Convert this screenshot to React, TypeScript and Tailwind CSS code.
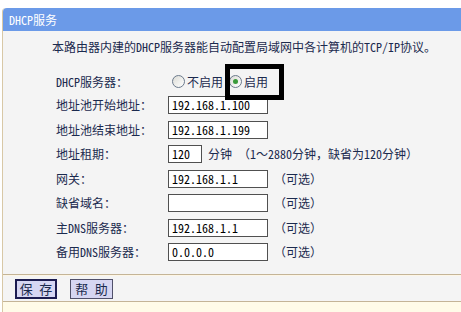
import React from "react";

const font = "font-['Noto_Sans_Mono_CJK_SC','Noto_Sans_CJK_SC',sans-serif]";

type Row = {
  label: string;
  value: string;
  width?: string;
  note?: string;
};

const rows: Row[] = [
  { label: "地址池开始地址：", value: "192.168.1.100" },
  { label: "地址池结束地址：", value: "192.168.1.199" },
  {
    label: "地址租期：",
    value: "120",
    width: "w-[34px]",
    note: "分钟 （1～2880分钟，缺省为120分钟）",
  },
  { label: "网关：", value: "192.168.1.1", note: "（可选）" },
  { label: "缺省域名：", value: "", note: "（可选）" },
  { label: "主DNS服务器：", value: "192.168.1.1", note: "（可选）" },
  { label: "备用DNS服务器：", value: "0.0.0.0", note: "（可选）" },
];

function Radio({ checked, label }: { checked?: boolean; label: string }) {
  return (
    <span className="flex items-center gap-[2px]">
      <span className="flex h-[13px] w-[13px] items-center justify-center rounded-full border border-[#6b7a8c] bg-gradient-to-br from-[#dcdcd6] to-white">
        {checked ? (
          <span className="h-[5px] w-[5px] rounded-full bg-[#3a9a3a]" />
        ) : null}
      </span>
      <span>{label}</span>
    </span>
  );
}

export default function App() {
  return (
    <div
      className={`relative h-[312px] w-[461px] overflow-hidden bg-white pl-[2px] pt-[8px] text-[12px] leading-[16px] text-[#1b2a4e] ${font}`}
    >
      <div className="rounded-tl-[4px] border-l border-[#d8c8a6]">
        <div className="flex h-[23px] items-center rounded-tl-[4px] bg-[#6b9ae8] pl-[6px] text-white">
          DHCP服务
        </div>

        <div className="h-[243px] bg-[#f4f4f4] pl-[49px] pt-[8px]">
          <p className="whitespace-nowrap">
            本路由器内建的DHCP服务器能自动配置局域网中各计算机的TCP/IP协议。
          </p>

          <div className="mt-[15px] pl-[4px]">
            <div className="flex h-[23px] items-center">
              <span className="w-[112px]">DHCP服务器：</span>
              <span className="flex items-center gap-[6px] pl-[4px]">
                <Radio label="不启用" />
                <Radio checked label="启用" />
              </span>
            </div>

            {rows.map((row) => (
              <div key={row.label} className="flex h-[24.5px] items-center">
                <span className="w-[112px] whitespace-nowrap">{row.label}</span>
                <span
                  className={`flex h-[18px] items-center border border-[#505050] bg-white pl-[3px] text-black ${
                    row.width ?? "w-[100px]"
                  }`}
                >
                  {row.value}
                </span>
                {row.note ? (
                  <span
                    className={`whitespace-nowrap ${
                      row.width ? "pl-[6px]" : "pl-[6px]"
                    }`}
                  >
                    {row.note}
                  </span>
                ) : null}
              </div>
            ))}
          </div>
        </div>

        <div className="border-t border-[#c4b497] bg-[#fdf6e6] pt-[1px]">
          <div className="flex h-[25px] items-center gap-[13px] bg-[#f4f4f4] pl-[12px]">
            <button
              type="button"
              className="h-[20px] w-[42px] border-2 border-[#1c1c50] bg-[#d6d6f2] text-[13px] leading-[16px] text-[#1b2a4e]"
            >
              保 存
            </button>
            <button
              type="button"
              className="h-[20px] w-[43px] border border-[#50506a] bg-[#d6d6f2] text-[13px] leading-[16px] text-[#1b2a4e]"
            >
              帮 助
            </button>
          </div>
        </div>

        <div className="h-[12px] border-t border-[#c4b497] bg-[#fffbe8]" />
      </div>

      <div className="absolute left-[225px] top-[64px] h-[36px] w-[59px] border-[5px] border-black" />
    </div>
  );
}
